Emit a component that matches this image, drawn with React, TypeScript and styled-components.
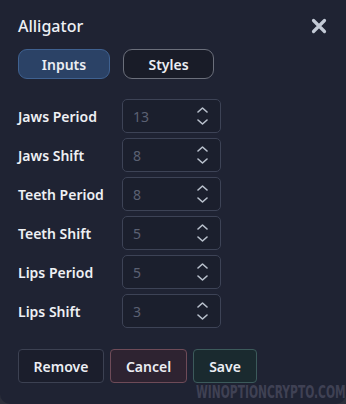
import React from "react";
import styled, { createGlobalStyle } from "styled-components";

const Global = createGlobalStyle`
  html, body { margin: 0; padding: 0; background: #2c2f3b; }
  body { font-family: "Noto Sans", "Open Sans", sans-serif; }
  * { box-sizing: border-box; }
`;

const Panel = styled.div`
  position: relative;
  width: 346px;
  height: 404px;
  background: #1f2333;
  border-radius: 0 0 10px 10px;
  padding: 16px 19px 0 18px;
  display: flex;
  flex-direction: column;
  overflow: hidden;
`;

const Header = styled.div`
  display: flex;
  align-items: center;
  justify-content: space-between;
  height: 20px;
`;

const Title = styled.div`
  color: #eef0f4;
  font-size: 16px;
  font-weight: 500;
  line-height: 20px;
`;

const Close = styled.button`
  width: 17px;
  height: 17px;
  padding: 0;
  border: none;
  background: none;
  display: flex;
  align-items: center;
  justify-content: center;
`;

const Tabs = styled.div`
  display: flex;
  gap: 13px;
  margin-top: 13px;
`;

const Tab = styled.button<{ $active?: boolean }>`
  height: 30px;
  width: ${(p) => (p.$active ? "92px" : "91px")};
  border-radius: 9px;
  border: 1px solid ${(p) => (p.$active ? "#3f6190" : "#6b6f7b")};
  background: ${(p) => (p.$active ? "#2b4266" : "#191c28")};
  color: #eceef3;
  font-family: "Noto Sans", sans-serif;
  font-size: 14px;
  font-weight: 600;
  padding: 0;
`;

const Form = styled.div`
  display: flex;
  flex-direction: column;
  gap: 5px;
  margin-top: 20px;
`;

const Row = styled.div`
  display: flex;
  align-items: center;
  height: 34px;
`;

const Label = styled.div`
  width: 104px;
  color: #eef0f4;
  font-size: 14px;
  font-weight: 600;
`;

const Field = styled.div`
  width: 99px;
  height: 34px;
  border: 1px solid #3d4356;
  border-radius: 5px;
  background: #1b1f2d;
  display: flex;
  align-items: center;
  justify-content: space-between;
  padding: 0 12px 0 10px;
`;

const Value = styled.span`
  color: #5b6173;
  font-size: 14px;
  font-weight: 400;
`;

const Spinner = styled.div`
  display: flex;
  flex-direction: column;
  align-items: center;
  gap: 6px;
`;

const Footer = styled.div`
  display: flex;
  gap: 6px;
  margin-top: 21px;
`;

const Btn = styled.button<{ $w: number; $bg: string; $bd: string }>`
  width: ${(p) => p.$w}px;
  height: 34px;
  border-radius: 4px;
  border: 1px solid ${(p) => p.$bd};
  background: ${(p) => p.$bg};
  color: #eceef3;
  font-family: "Noto Sans", sans-serif;
  font-size: 14px;
  font-weight: 600;
  padding: 0;
`;

const Watermark = styled.div`
  position: absolute;
  left: 196px;
  top: 383px;
  color: #3f4154;
  font-family: "DejaVu Sans Condensed", "DejaVu Sans", sans-serif;
  font-weight: 700;
  font-size: 18px;
  line-height: 18px;
  transform: scaleX(0.66);
  transform-origin: left center;
  white-space: nowrap;
`;

const Chevron = ({ up }: { up?: boolean }) => (
  <svg width="11" height="6" viewBox="0 0 11 6">
    <path
      d={up ? "M1 5 L5.5 1 L10 5" : "M1 1 L5.5 5 L10 1"}
      fill="none"
      stroke="#b9c0cc"
      strokeWidth="1.6"
      strokeLinecap="round"
      strokeLinejoin="round"
    />
  </svg>
);

const rows = [
  ["Jaws Period", "13"],
  ["Jaws Shift", "8"],
  ["Teeth Period", "8"],
  ["Teeth Shift", "5"],
  ["Lips Period", "5"],
  ["Lips Shift", "3"],
];

export default function App() {
  return (
    <>
      <Global />
      <Panel>
        <Header>
          <Title>Alligator</Title>
          <Close aria-label="close">
            <svg width="16" height="16" viewBox="0 0 16 16">
              <path
                d="M2.5 2.5 L13.5 13.5 M13.5 2.5 L2.5 13.5"
                stroke="#c3cad6"
                strokeWidth="3.2"
                strokeLinecap="round"
              />
            </svg>
          </Close>
        </Header>
        <Tabs>
          <Tab $active>Inputs</Tab>
          <Tab>Styles</Tab>
        </Tabs>
        <Form>
          {rows.map(([l, v]) => (
            <Row key={l}>
              <Label>{l}</Label>
              <Field>
                <Value>{v}</Value>
                <Spinner>
                  <Chevron up />
                  <Chevron />
                </Spinner>
              </Field>
            </Row>
          ))}
        </Form>
        <Footer>
          <Btn $w={86} $bg="#1b1e2c" $bd="#3c4152">Remove</Btn>
          <Btn $w={77} $bg="#2e2331" $bd="#6e4b58">Cancel</Btn>
          <Btn $w={64} $bg="#1a2a2f" $bd="#3c5a5b">Save</Btn>
        </Footer>
        <Watermark>WINOPTIONCRYPTO.COM</Watermark>
      </Panel>
    </>
  );
}
